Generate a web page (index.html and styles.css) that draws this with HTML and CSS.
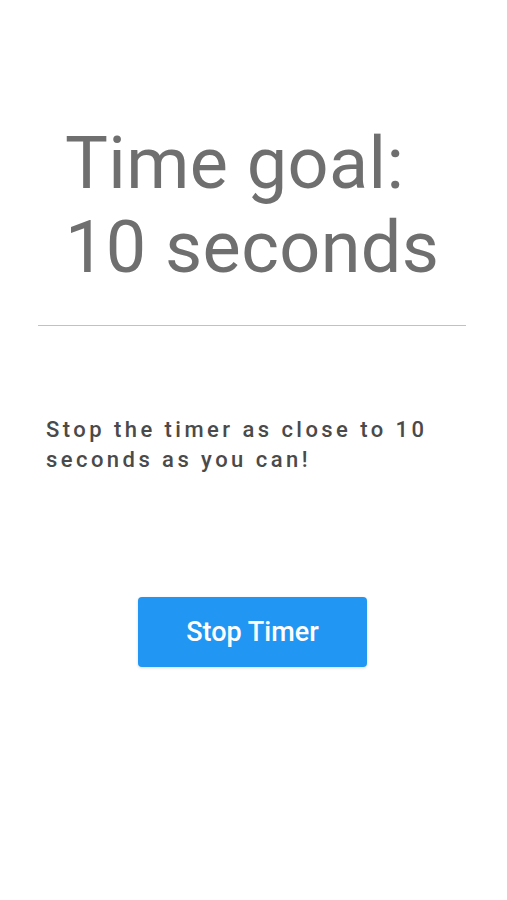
FILE: index.html
```html
<!DOCTYPE html>
<html>
<head>
<meta charset="utf-8">
<link rel="stylesheet" href="styles.css">
</head>
<body>
<main class="screen">
  <h1 class="goal">Time goal:<br>10 seconds</h1>
  <hr class="divider">
  <p class="instructions">Stop the timer as close to 10 seconds as you can!</p>
  <div class="actions">
    <button class="stop-btn">Stop Timer</button>
  </div>
</main>
</body>
</html>
```
FILE: styles.css
```css
html, body {
  margin: 0;
  padding: 0;
  background: #ffffff;
}
.screen {
  width: 507px;
  height: 900px;
  display: flex;
  flex-direction: column;
  font-family: Roboto, "Liberation Sans", sans-serif;
}
.goal {
  margin: 122px 0 0 0;
  padding-left: 65px;
  font-size: 72px;
  line-height: 84px;
  letter-spacing: 0.4px;
  font-weight: 400;
  color: #6f6f6f;
}
.divider {
  margin: 35px 0 0 38px;
  width: 428px;
  height: 1px;
  border: none;
  background: #a9c9d8;
}
.instructions {
  margin: 89px 0 0 46px;
  width: 450px;
  font-size: 22px;
  line-height: 30px;
  font-weight: 500;
  letter-spacing: 3.45px;
  color: #4a4a4a;
}
.actions {
  display: flex;
  justify-content: center;
  margin-top: 122px;
  padding-right: 2px;
}
.stop-btn {
  width: 229px;
  height: 70px;
  border: none;
  border-radius: 4px;
  background: #2196f3;
  color: #ffffff;
  font-family: Roboto, "Liberation Sans", sans-serif;
  font-weight: 500;
  font-size: 27px;
  box-shadow: 0 1px 3px rgba(0,0,0,0.15);
}
```
